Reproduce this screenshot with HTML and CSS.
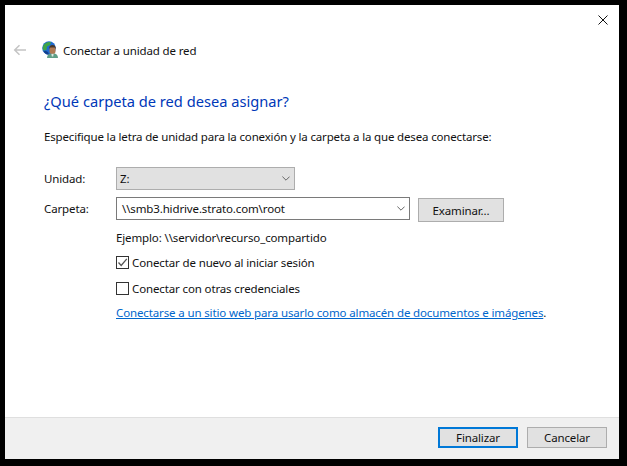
FILE: index.html
```html
<!DOCTYPE html>
<html lang="es">
<head>
<meta charset="utf-8">
<title>Conectar a unidad de red</title>
<link rel="stylesheet" href="styles.css">
</head>
<body>
<main class="window">
  <div class="titlebar">
    <svg class="close" width="10" height="10" viewBox="0 0 10 10"><path d="M.5.5l9 9M9.5.5l-9 9" stroke="#111" fill="none"/></svg>
  </div>
  <div class="nav">
    <svg class="back" width="14" height="12" viewBox="0 0 14 12"><path d="M13 6H2M6.500 1.200L1.700 6l4.800 4.800" stroke="#c4c4c4" stroke-width="1.500" fill="none"/></svg>
    <svg class="wizard-icon" width="17" height="18" viewBox="0 0 17 18">
      <circle cx="7" cy="7" r="6.800" fill="#1f6ad0"/>
      <path d="M2.500 3c2-2 4.500-2.500 6.500-1.800L8 4 5 5.500 4.500 9 1.500 9.500C.2 7 .8 4.500 2.500 3z" fill="#3fa548"/>
      <path d="M1.500 10.500C3 12.800 5 14 7 13.800L6 11 3.500 9.800z" fill="#123f8e"/>
      <path d="M5 17c0-3.200 1.800-4.800 5.500-4.800S16 13.800 16 17z" fill="#5f9e86"/>
      <path d="M9.300 12.500h2.400l-.5 3h-1.400z" fill="#d9e8e0"/>
      <rect x="7.500" y="5.200" width="6" height="7.600" rx="2.600" fill="#b07a52"/>
      <path d="M7.300 8c-.3-2.500 1-4 3.200-4s3.500 1.500 3.200 4l-1-1.500H8.300z" fill="#4a3628"/>
    </svg>
    <span class="nav-title">Conectar a unidad de red</span>
  </div>
  <div class="content">
    <h1 class="heading">¿Qué carpeta de red desea asignar?</h1>
    <p class="intro">Especifique la letra de unidad para la conexión y la carpeta a la que desea conectarse:</p>
    <div class="form">
      <span class="label">Unidad:</span>
      <div class="row">
        <div class="combo combo-drive">
          <span>Z:</span>
          <svg class="chevron" width="8" height="5" viewBox="0 0 8 5"><path d="M.4.6L4 4.200 7.600.6" stroke="#666" fill="none"/></svg>
        </div>
      </div>
      <span class="label">Carpeta:</span>
      <div class="row">
        <div class="combo combo-folder">
          <span>\\smb3.hidrive.strato.com\root</span>
          <svg class="chevron" width="8" height="5" viewBox="0 0 8 5"><path d="M.4.6L4 4.200 7.600.6" stroke="#666" fill="none"/></svg>
        </div>
        <button class="btn btn-browse" type="button">Examinar...</button>
      </div>
      <div class="options">
        <div class="example">Ejemplo: \\servidor\recurso_compartido</div>
        <div class="check check-first">
          <span class="box"><svg width="11" height="11" viewBox="0 0 11 11"><path d="M1.500 5.500L4.200 8.500 9.800 1.800" stroke="#555" stroke-width="1.300" fill="none"/></svg></span>
          <span>Conectar de nuevo al iniciar sesión</span>
        </div>
        <div class="check check-second">
          <span class="box"></span>
          <span>Conectar con otras credenciales</span>
        </div>
        <a class="link" href="#">Conectarse a un sitio web para usarlo como almacén de documentos e imágenes</a><span class="dot">.</span>
      </div>
    </div>
  </div>
  <div class="footer">
    <button class="btn btn-primary" type="button">Finalizar</button>
    <button class="btn btn-footer" type="button">Cancelar</button>
  </div>
</main>
</body>
</html>
```
FILE: styles.css
```css
* { box-sizing: border-box; }
html, body { margin: 0; height: 100%; }
body {
  background: #000;
  padding: 5px 8px 7px 5px;
  font-family: "Noto Sans", "Open Sans", sans-serif;
  font-size: 11.5px;
  letter-spacing: -0.13px;
  color: #111;
}
.window {
  height: 454px;
  background: #fff;
  display: flex;
  flex-direction: column;
}
.titlebar {
  height: 29px;
  display: flex;
  justify-content: flex-end;
  padding: 10px 11px 0 0;
  flex: none;
}
.close { display: block; }
.nav {
  height: 32px;
  flex: none;
  display: flex;
  align-items: center;
  padding-left: 8px;
}
.back { margin-right: 15px; }
.wizard-icon { margin-right: 4px; }
.content { flex: 1; padding-left: 39px; }
.heading {
  margin: 24px 0 0;
  font-size: 14.65px;
  letter-spacing: 0;
  line-height: 22px;
  font-weight: 400;
  color: #0038b8;
}
.intro { margin: 17px 0 0; line-height: 16px; letter-spacing: -0.16px; }
.form {
  margin-top: 22px;
  display: grid;
  grid-template-columns: 72px 1fr;
  grid-template-rows: 23px 23px;
  row-gap: 7px;
  align-items: center;
}
.row { display: flex; align-items: flex-start; height: 23px; }
.combo {
  height: 23px;
  display: flex;
  align-items: center;
  justify-content: space-between;
  border: 1px solid #7a7a7a;
  padding: 0 4px 0 5px;
  flex: none;
}
.combo-drive { width: 179px; background: #e1e1e1; border-color: #adadad; padding-left: 3px; }
.combo-folder { width: 294px; background: #fff; }
.btn {
  font: inherit;
  letter-spacing: inherit;
  color: #111;
  background: #e1e1e1;
  border: 1px solid #adadad;
  padding: 0;
  flex: none;
}
.btn-browse { width: 86px; height: 24px; margin: 1px 0 0 8px; }
.options { grid-column: 2; }
.example { margin-top: 3px; line-height: 16px; }
.check { display: flex; align-items: center; gap: 3px; height: 16px; }
.check-first { margin-top: 8px; }
.check-second { margin-top: 10px; }
.box {
  width: 13px;
  height: 13px;
  border: 1px solid #333;
  background: #fff;
  display: flex;
  align-items: center;
  justify-content: center;
  flex: none;
}
.box svg { display: block; }
.link { display: inline-block; margin-top: 9px; line-height: 16px; color: #0066cc; text-decoration: underline; }
.footer {
  height: 42px;
  flex: none;
  background: #f0f0f0;
  border-top: 1px solid #dfdfdf;
  display: flex;
  justify-content: flex-end;
  gap: 9px;
  padding: 9px 12px 0 0;
}
.btn-primary, .btn-footer { width: 80px; height: 21px; }
.btn-primary { border: 2px solid #0078d7; }
```
